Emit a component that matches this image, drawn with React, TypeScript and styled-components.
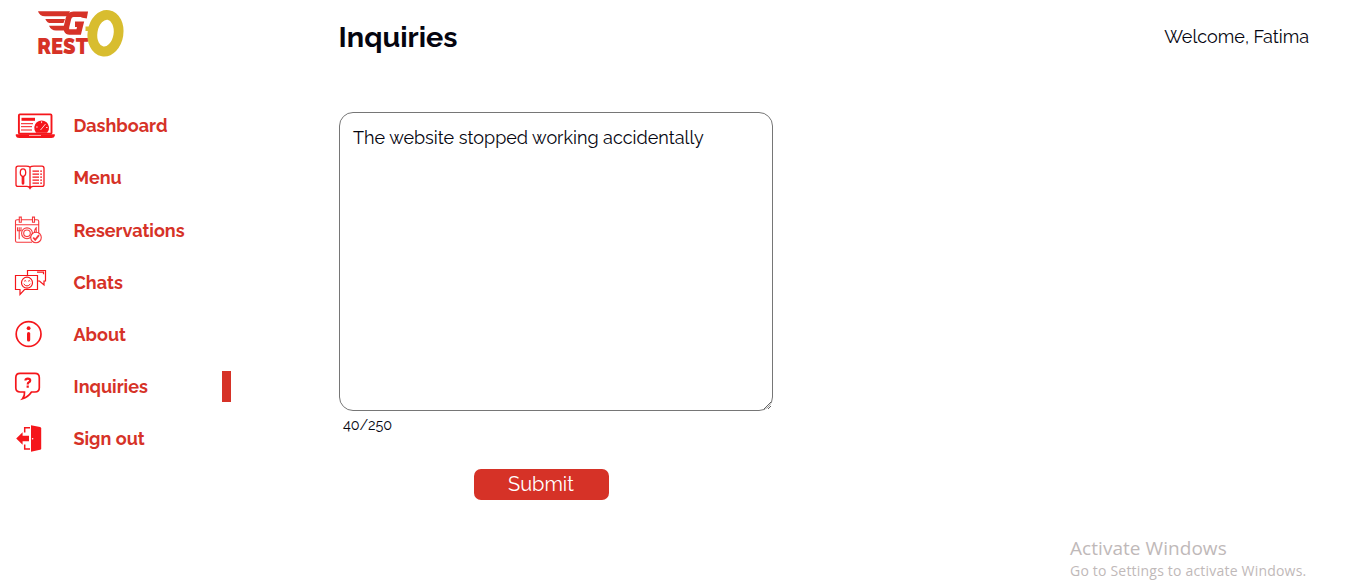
import React, { useState } from 'react';
import styled, { createGlobalStyle } from 'styled-components';

const GlobalStyle = createGlobalStyle`
  * { box-sizing: border-box; }
  body {
    margin: 0;
    background: #fff;
    color: #05050f;
    font-family: Raleway, Lato, "Open Sans", sans-serif;
    overflow: hidden;
  }
`;

const Page = styled.div`
  display: flex;
  height: 582px;
`;

const Sidebar = styled.aside`
  width: 339px;
  flex: none;
`;

const LogoLink = styled.a`
  display: block;
  height: 60px;
  margin: 5px 0 45.28px 30px;
`;

const NavItem = styled.a<{ $active?: boolean }>`
  display: flex;
  align-items: center;
  width: 231px;
  height: 31px;
  margin-bottom: 21.15px;
  color: #d63227;
  font-size: 18px;
  font-weight: 700;
  text-decoration: none;
  border-right: ${(p) => (p.$active ? '9px solid #d63227' : '0')};
`;

const IconSlot = styled.span`
  display: flex;
  width: 63.5px;
  margin-left: 10px;
`;

const Main = styled.main`
  flex: 1;
  display: flex;
  flex-direction: column;
`;

const Header = styled.header`
  display: flex;
  justify-content: space-between;
  align-items: center;
  height: 74px;
  padding-right: 49px;
`;

const Title = styled.h1`
  margin: 0 0 0 -0.5px;
  font-size: 28.8px;
  font-weight: 700;
`;

const Welcome = styled.span`
  margin-top: -2px;
  font-size: 18px;
  font-weight: 400;
`;

const InquiryForm = styled.form`
  display: flex;
  flex-direction: column;
  width: 434px;
  margin-top: 38px;
`;

const Message = styled.textarea`
  display: block;
  width: 434px;
  height: 299px;
  padding: 12px 13px;
  border: 1px solid #767676;
  border-radius: 14px;
  outline: none;
  background: #fff;
  color: #05050f;
  font: 400 18px/26px Raleway, Lato, "Open Sans", sans-serif;
`;

const Counter = styled.span`
  margin: 5px 0 0 4px;
  font-size: 14.4px;
  line-height: 18px;
  font-weight: 400;
`;

const Submit = styled.button`
  width: 135px;
  height: 31px;
  margin: 35px 0 0 135px;
  padding: 0 1px 2px 0;
  border: 0;
  border-radius: 7px;
  background: #d63227;
  color: #fff;
  font: 400 20px Raleway, Lato, "Open Sans", sans-serif;
`;

const Watermark = styled.div`
  position: absolute;
  left: 1070px;
  top: 536px;
  color: #bfb9b9;
  font-family: "Segoe UI", "Open Sans", sans-serif;
`;

const WatermarkTitle = styled.div`
  font-size: 19px;
  line-height: 24px;
  letter-spacing: 0.05px;
  white-space: nowrap;
`;

const WatermarkText = styled.div`
  font-size: 14px;
  line-height: 21px;
  letter-spacing: 0.2px;
  white-space: nowrap;
`;

const Logo = () => (
  <svg width="100" height="60" viewBox="0 0 100 60">
    <path d="M8 6.3H40L37.5 11.3H15Q9.5 11.3 8 6.3ZM15.3 13.9H35L33.5 18.1H21Q17 18.1 15.3 13.9ZM19 20.7H34L35 25.4H26Q21 25.4 19 20.7Z" fill="#d63227" />
    <path d="M54 13L54.7 9.2H43.5Q39.5 9.2 38.5 13.4L36.6 21.3Q35.5 27 39.5 27H48.7L50.6 19.2H45" fill="none" stroke="#d63227" strokeWidth="5.6" />
    <text x="7.3" y="49" fontFamily="Raleway, Lato, sans-serif" fontSize="22" fontWeight="900" fill="#d63227" textLength="51" lengthAdjust="spacingAndGlyphs">REST</text>
    <path d="M55.5 21.5H62V26H55.5Z" fill="#d8bd2f" />
    <ellipse cx="75.5" cy="28.2" rx="13" ry="18.4" transform="rotate(9 75.5 28.2)" fill="none" stroke="#d8bd2f" strokeWidth="9.8" />
  </svg>
);

const Icon = ({ children }: { children: React.ReactNode }) => (
  <svg width="50" height="40" viewBox="0 0 50 40" fill="none" stroke="#f5161b" strokeWidth="1.3">
    {children}
  </svg>
);

const DashboardIcon = () => (
  <Icon>
    <rect x="8.9" y="8.4" width="32.6" height="19.4" rx="1" strokeWidth="1.9" />
    <path d="M5.8 28.2H44.8V29.5Q44.3 32 41.3 32H9.3Q6.3 32 5.8 29.5Z" fill="#f5161b" stroke="none" />
    <path d="M19 29.5H31" stroke="#fff" strokeWidth="0.6" />
    <path d="M11.5 13.3H25" strokeWidth="3" />
    <path d="M11 17.7H23M11 20.7H22M11 24H22" strokeWidth="1" />
    <path d="M26 26.7Q24 24.5 24.3 21A7.4 7.4 0 0 1 39 21Q39.5 24.5 37 26.7Z" fill="#f5161b" stroke="none" />
    <path d="M30.5 24L35.5 18M26 21H27.8M31.6 17.1V15.3M37.6 21.5H36" stroke="#fff" strokeWidth="0.8" />
  </Icon>
);

const MenuIcon = () => (
  <Icon>
    <g transform="translate(0 .4)">
      <path d="M20 8.8Q19 7.8 16 7.8H8Q6 7.8 6 10V26Q6 28 8 28H17Q19 28 20 30Q21 28 23 28H32Q34 28 34 26V10Q34 7.8 32 7.8H24Q21 7.8 20 8.8V30" />
      <ellipse cx="13" cy="14.2" rx="2.7" ry="3.8" />
      <rect x="12.3" y="18.2" width="1.4" height="7.4" rx="0.7" />
      <path d="M22.5 12.7H29M22.5 15.7H29M22.5 18.7H29M22.5 21.7H29M22.5 24.7H29M30.2 12.7H32M30.2 15.7H32M30.2 18.7H32M30.2 21.7H32M30.2 24.7H32" strokeWidth="1.1" />
    </g>
  </Icon>
);

const ReservationsIcon = () => (
  <Icon>
    <g strokeWidth="1.1" strokeOpacity="0.85" transform="translate(0 1.3)">
      <path d="M22 31H7Q5.5 31 5.5 29.5V9.5Q5.5 8.5 7 8.5H27Q28.7 8.5 28.7 10V23M5.5 13.5H28.7" />
      <path d="M9.3 5.8H11.3V11H9.3ZM22.5 5.8H24.5V11H22.5Z" fill="#fff" />
      <path d="M7.5 16V19.5H11V16M9.2 16V28M26.2 23V16.5Q24.3 18 24.3 21.5H26" />
      <circle cx="17" cy="22" r="5.4" />
      <circle cx="17" cy="22" r="3.3" />
      <circle cx="26" cy="26.2" r="5.3" fill="#fff" />
      <path d="M23.2 26.2L25.2 28.5L29 23.8" strokeWidth="1.8" />
    </g>
  </Icon>
);

const ChatsIcon = () => (
  <Icon>
    <g strokeWidth="1.2">
      <path d="M17.5 13.5V8.5H35.5V19H34V23L29.5 19H27.5" />
      <path d="M27.5 13.5H5.5V27.5H10V32.5L14.5 27.5H27.5ZM27 10.2H33.5V12.2" />
      <circle cx="17" cy="20.7" r="5.5" />
      <path d="M13.7 21.9Q17 26 20.4 21.9M14.2 19.3Q15.2 17.7 16.2 19.3M18.2 19.3Q19.2 17.7 20.2 19.3" strokeWidth="1" />
    </g>
  </Icon>
);

const AboutIcon = () => (
  <Icon>
    <circle cx="18.6" cy="20" r="12.4" strokeWidth="1.7" />
    <circle cx="18.6" cy="14.2" r="1.9" fill="#f5161b" stroke="none" />
    <path d="M18.6 19.5V26" strokeWidth="3.2" strokeLinecap="round" />
  </Icon>
);

const InquiriesIcon = () => (
  <Icon>
    <path d="M10 7.4H25Q29.3 7.4 29.3 11.7V21.7Q29.3 26 25 26H21.5Q18 31.2 12.5 32.7Q15 29.7 14.5 26H10Q5.8 26 5.8 21.7V11.7Q5.8 7.4 10 7.4Z" strokeWidth="1.7" />
    <path d="M15.4 14.5Q15.6 12.6 17.8 12.6Q20.2 12.6 20.2 14.5Q20.2 15.7 18.9 16.3Q17.7 16.9 17.7 18.4M17.7 19.5V21.7" strokeWidth="2.2" />
  </Icon>
);

const SignOutIcon = () => (
  <Icon>
    <path d="M20 8.8H14.7V13.5M14.7 25.5V30H20" strokeWidth="1.5" />
    <path d="M21 6.3L30 8.1Q31.2 8.4 31.2 9.6V29.4Q31.2 30.5 30 30.8L21 32.8Z" fill="#f5161b" stroke="none" />
    <path d="M6.2 19.5L12.6 13.3V16.7H19V22.3H12.6V25.7Z" fill="#f5161b" stroke="none" />
    <circle cx="22.6" cy="19.7" r="0.8" fill="#fff" stroke="none" />
  </Icon>
);

const items = [
  { label: 'Dashboard', icon: <DashboardIcon /> },
  { label: 'Menu', icon: <MenuIcon /> },
  { label: 'Reservations', icon: <ReservationsIcon /> },
  { label: 'Chats', icon: <ChatsIcon /> },
  { label: 'About', icon: <AboutIcon /> },
  { label: 'Inquiries', icon: <InquiriesIcon /> },
  { label: 'Sign out', icon: <SignOutIcon /> },
];

export default function App() {
  const [message, setMessage] = useState('The website stopped working accidentally');
  return (
    <Page>
      <GlobalStyle />
      <Sidebar>
        <LogoLink><Logo /></LogoLink>
        <nav>
          {items.map((item) => (
            <NavItem key={item.label} $active={item.label === 'Inquiries'}>
              <IconSlot>{item.icon}</IconSlot>
              <span>{item.label}</span>
            </NavItem>
          ))}
        </nav>
      </Sidebar>
      <Main>
        <Header>
          <Title>Inquiries</Title>
          <Welcome>Welcome, Fatima</Welcome>
        </Header>
        <InquiryForm>
          <Message value={message} maxLength={250} spellCheck={false} onChange={(e) => setMessage(e.target.value)} />
          <Counter>{message.length}/250</Counter>
          <Submit type="button">Submit</Submit>
        </InquiryForm>
      </Main>
      <Watermark>
        <WatermarkTitle>Activate Windows</WatermarkTitle>
        <WatermarkText>Go to Settings to activate Windows.</WatermarkText>
      </Watermark>
    </Page>
  );
}
